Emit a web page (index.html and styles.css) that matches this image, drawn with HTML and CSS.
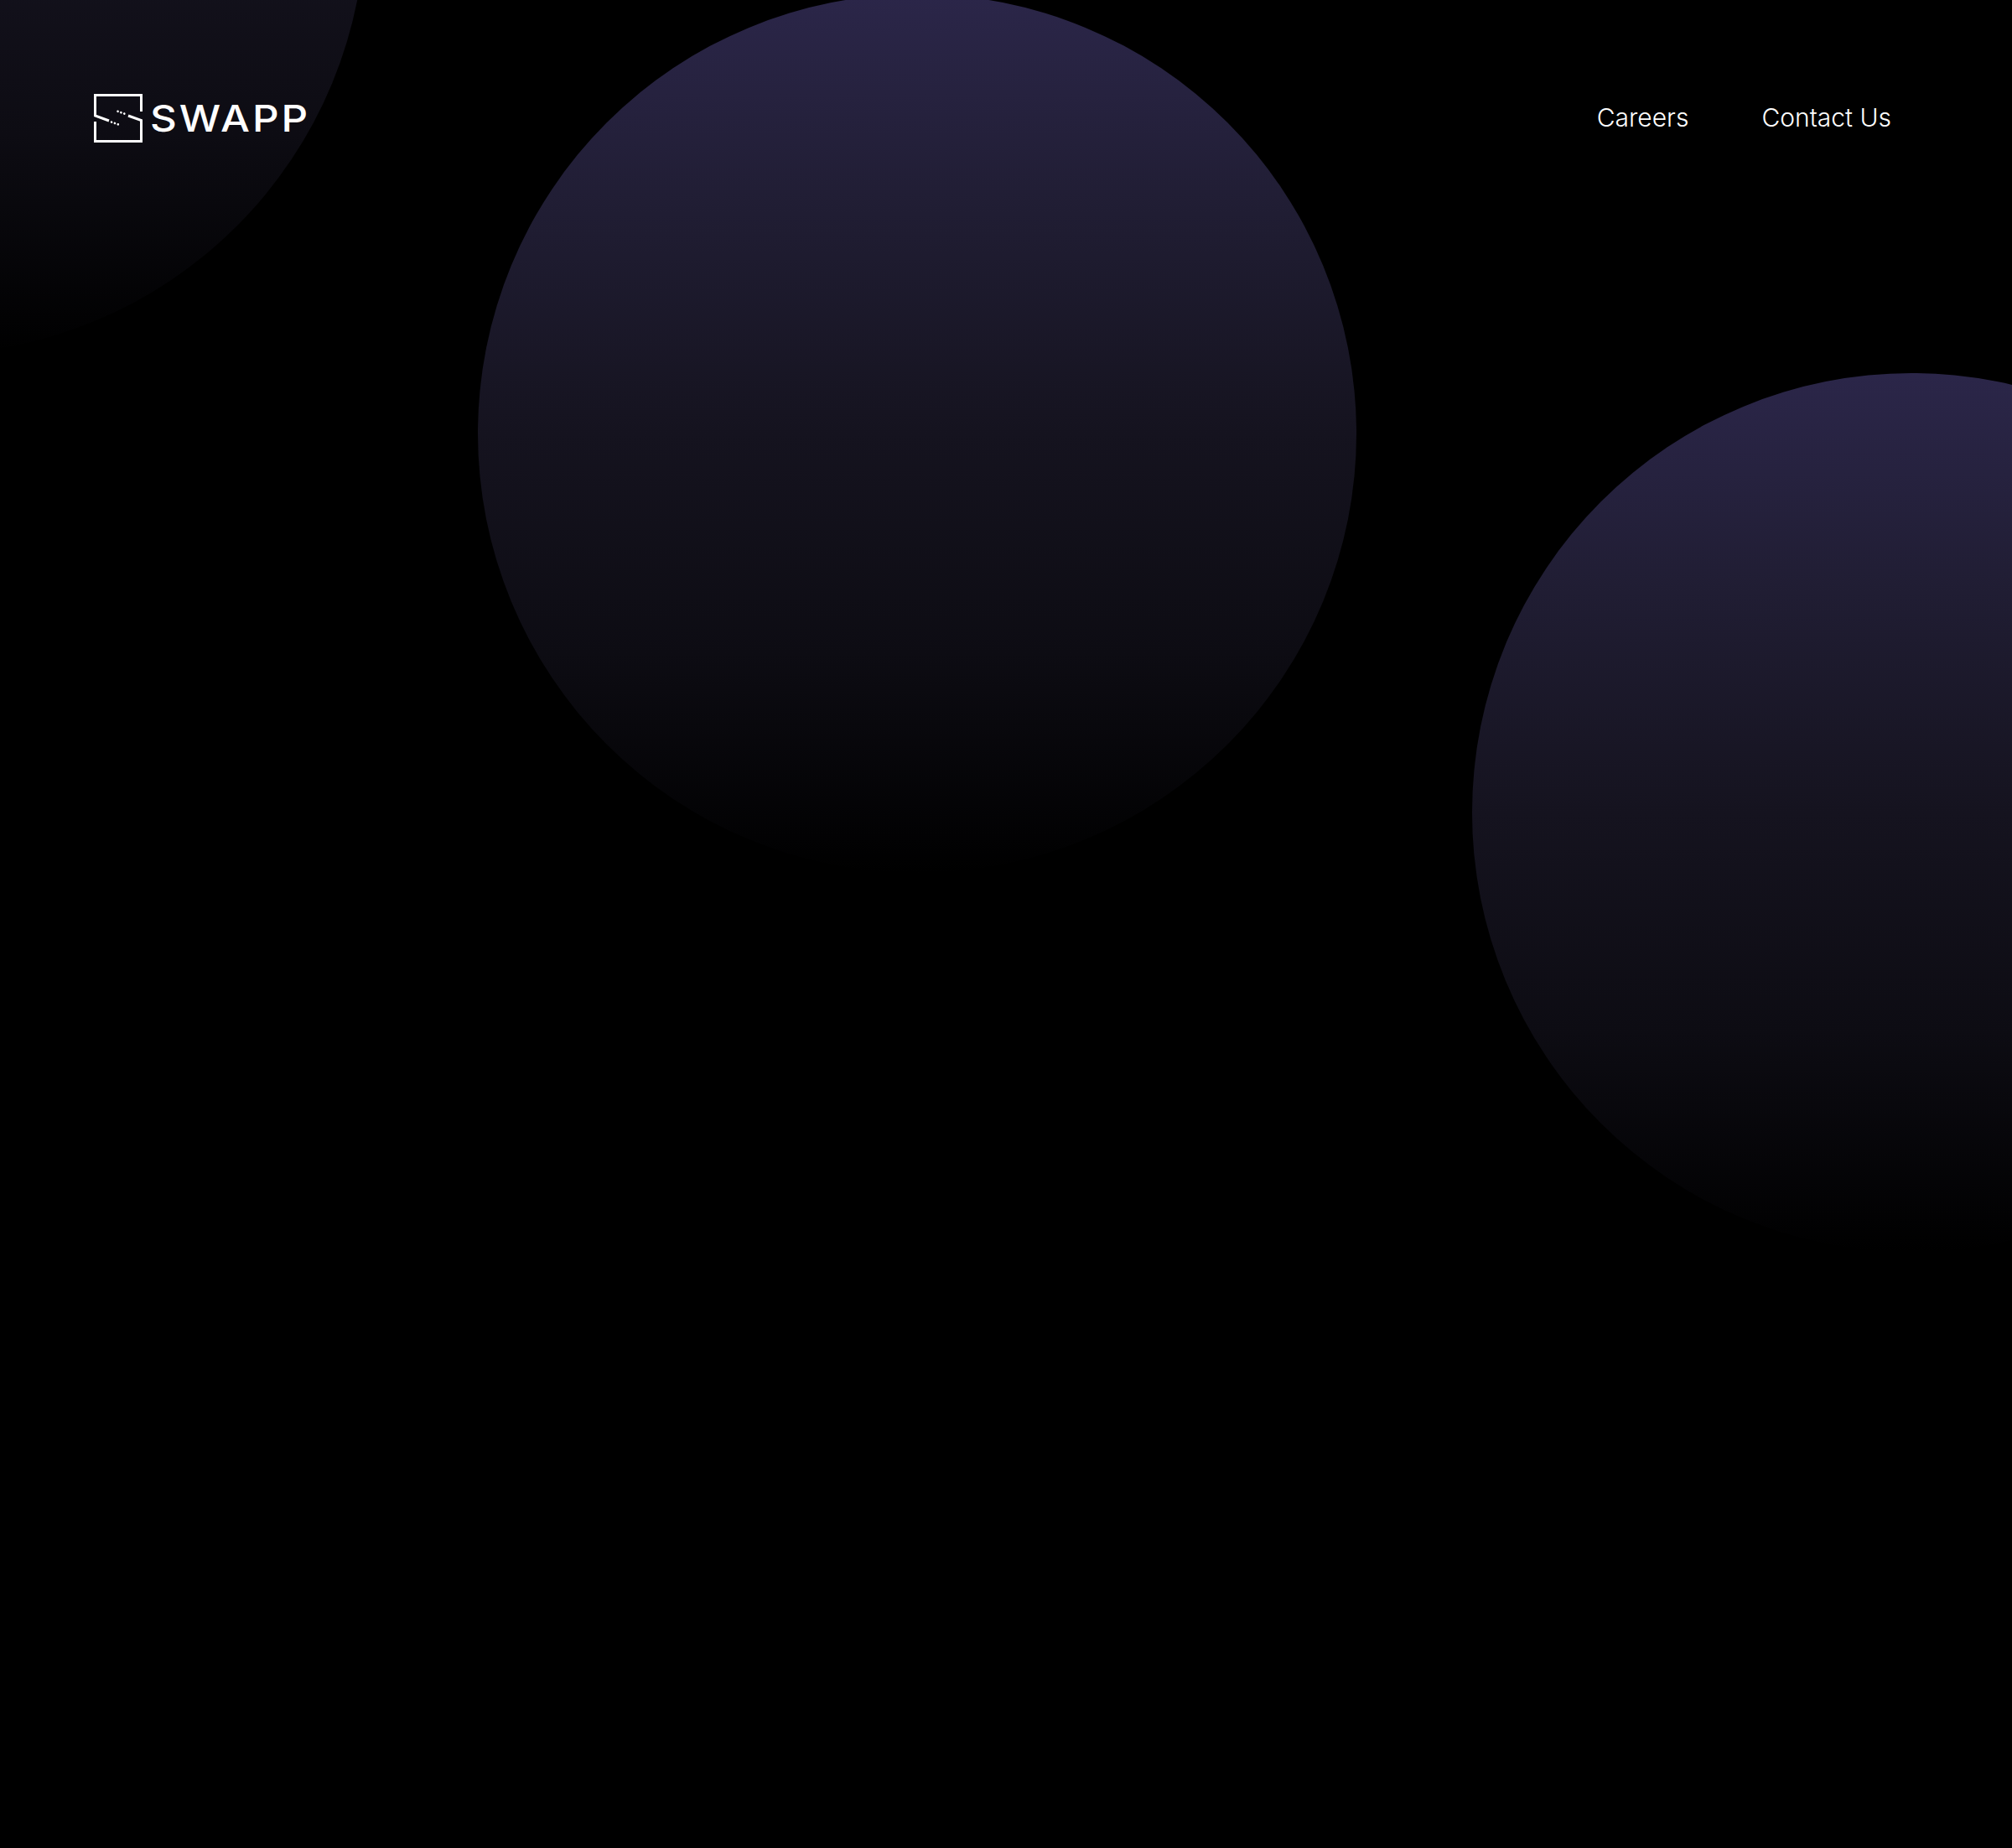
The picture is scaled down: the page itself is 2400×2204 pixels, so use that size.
FILE: index.html
```html
<!DOCTYPE html>
<html>
    <head>
        <meta charset="utf-8">
        <title>Swapp</title>
        <link rel="stylesheet" href="styles.css">
    </head>
    <body>
        <div class="circle circle-left"></div>
        <div class="circle circle-middle"></div>
        <div class="circle circle-right"></div>

        <header class="header">
            <a class="logo" href="#">
                <svg class="logo-mark" viewBox="0 0 60 60" fill="none" stroke="#fff" stroke-width="3">
                    <path d="M57.5 22V2.5H2.5V27L19 33"/>
                    <path d="M2.5 34V57.5H57.5V32.5L42 27"/>
                    <path d="M22 34.6L30 37.4M29.5 21.8L38.5 25" stroke-width="2.6" stroke-linecap="round" stroke-dasharray="0.1 4"/>
                </svg>
                <span class="logo-text">SWAPP</span>
            </a>
            <nav class="nav">
                <a href="#">Careers</a>
                <a href="#">Contact Us</a>
            </nav>
        </header>
    </body>
</html>
```

FILE: styles.css
```css
html, body {
    height: 100%;
}
body {
    background-color: black;
    margin: 0;
    font-family: Inter, "Noto Sans", Arial, sans-serif;
    overflow: hidden;
    position: relative;
}

a {
    color: white;
    text-decoration: none;
}

.circle {
    position: absolute;
    width: 1048px;
    height: 1048px;
    border-radius: 50%;
    background: linear-gradient(180deg, #2b2649 0%, #201d33 25%, #15131f 50%, #0d0c13 75%, #000 100%);
}
.circle-left {
    left: -612px;
    top: -625px;
}
.circle-middle {
    left: 570px;
    top: -7px;
}
.circle-right {
    left: 1756px;
    top: 445px;
}

.header {
    position: relative;
    display: flex;
    align-items: center;
    justify-content: space-between;
    padding: 111px 144px 0 111px;
}

.logo {
    display: flex;
    align-items: center;
    gap: 8px;
}
.logo-mark {
    width: 60px;
    height: 60px;
}
.logo-text {
    font-size: 44px;
    font-weight: 500;
    letter-spacing: 2.6px;
    line-height: 60px;
    transform: scaleX(1.12);
    transform-origin: left center;
}

.nav {
    display: flex;
    gap: 87px;
    font-size: 30px;
    font-weight: 300;
    margin-bottom: 2px;
}
```
